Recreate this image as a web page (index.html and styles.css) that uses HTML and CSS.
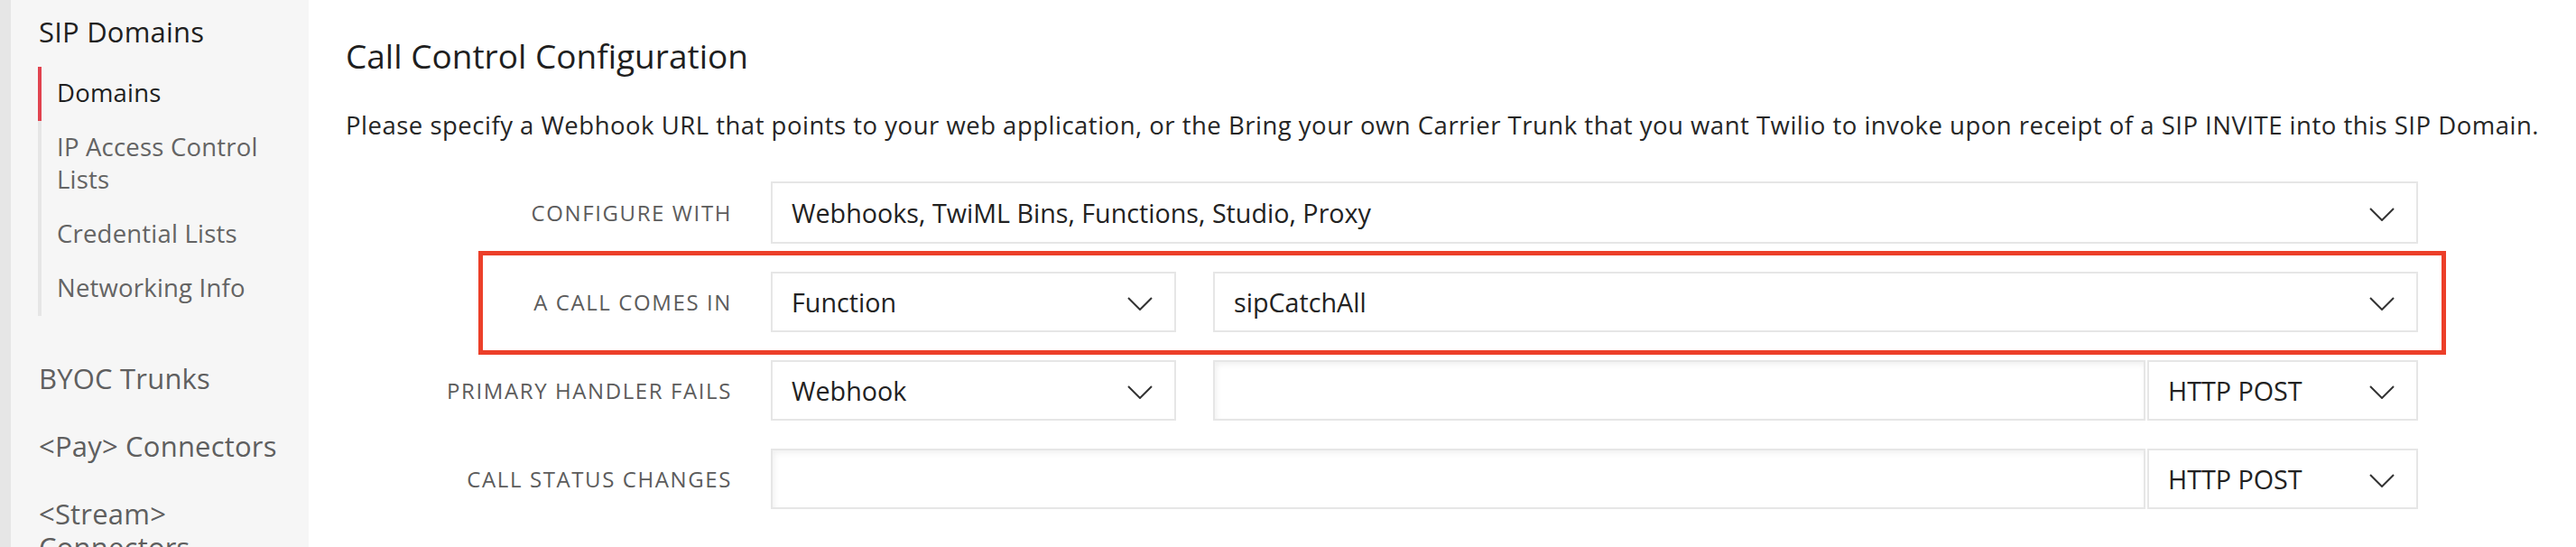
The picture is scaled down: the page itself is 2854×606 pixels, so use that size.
FILE: index.html
```html
<!DOCTYPE html>
<html lang="en">
<head>
<meta charset="utf-8">
<title>Call Control Configuration</title>
<link rel="stylesheet" href="styles.css">
</head>
<body>
<div class="app">
  <div class="rail"></div>
  <nav class="sidebar">
    <div class="nav-title">SIP Domains</div>
    <ul class="subnav">
      <li class="sub active">Domains</li>
      <li class="sub">IP Access Control Lists</li>
      <li class="sub">Credential Lists</li>
      <li class="sub">Networking Info</li>
    </ul>
    <div class="nav-item">BYOC Trunks</div>
    <div class="nav-item">&lt;Pay&gt; Connectors</div>
    <div class="nav-item">&lt;Stream&gt; Connectors</div>
  </nav>
  <main class="main">
    <h2 class="heading">Call Control Configuration</h2>
    <p class="intro">Please specify a Webhook URL that points to your web application, or the Bring your own Carrier Trunk that you want Twilio to invoke upon receipt of a SIP INVITE into this SIP Domain.</p>
    <div class="form">
      <div class="row row-first">
        <div class="label">Configure with</div>
        <div class="fields">
          <div class="select grow">
            <span class="value">Webhooks, TwiML Bins, Functions, Studio, Proxy</span>
            <svg class="chev" viewBox="0 0 28 15" width="28" height="15"><polyline points="1,1 14,14 27,1"/></svg>
          </div>
        </div>
      </div>
      <div class="row highlighted">
        <div class="label">A call comes in</div>
        <div class="fields">
          <div class="select narrow">
            <span class="value">Function</span>
            <svg class="chev" viewBox="0 0 28 15" width="28" height="15"><polyline points="1,1 14,14 27,1"/></svg>
          </div>
          <div class="select grow spaced">
            <span class="value">sipCatchAll</span>
            <svg class="chev" viewBox="0 0 28 15" width="28" height="15"><polyline points="1,1 14,14 27,1"/></svg>
          </div>
        </div>
        <div class="annotation"></div>
      </div>
      <div class="row">
        <div class="label">Primary handler fails</div>
        <div class="fields">
          <div class="select narrow">
            <span class="value">Webhook</span>
            <svg class="chev" viewBox="0 0 28 15" width="28" height="15"><polyline points="1,1 14,14 27,1"/></svg>
          </div>
          <div class="input grow spaced"></div>
          <div class="select method">
            <span class="value">HTTP POST</span>
            <svg class="chev" viewBox="0 0 28 15" width="28" height="15"><polyline points="1,1 14,14 27,1"/></svg>
          </div>
        </div>
      </div>
      <div class="row">
        <div class="label">Call status changes</div>
        <div class="fields">
          <div class="input grow"></div>
          <div class="select method">
            <span class="value">HTTP POST</span>
            <svg class="chev" viewBox="0 0 28 15" width="28" height="15"><polyline points="1,1 14,14 27,1"/></svg>
          </div>
        </div>
      </div>
    </div>
  </main>
</div>
</body>
</html>
```
FILE: styles.css
```css
* { box-sizing: border-box; }

html, body {
  margin: 0;
  padding: 0;
  background: #ffffff;
}

body {
  font-family: "Open Sans", "Noto Sans", sans-serif;
  color: #222222;
}

.app {
  display: flex;
  height: 606px;
  overflow: hidden;
}

.rail {
  width: 12px;
  flex: none;
  background: #e6e6e6;
}

.sidebar {
  width: 330px;
  flex: none;
  background: #f6f6f6;
  padding: 17px 12px 0 31px;
}

.nav-title {
  font-size: 31px;
  line-height: 37px;
  letter-spacing: 0.2px;
  color: #1f1f1f;
}

.subnav {
  list-style: none;
  margin: 20px 0 32px -1px;
  padding: 0;
  border-left: 4px solid #e6e6e6;
}

.sub {
  font-size: 27.5px;
  line-height: 36px;
  letter-spacing: 0.2px;
  padding: 11px 0 13px 17px;
  margin-left: -4px;
  border-left: 4px solid transparent;
  color: #646464;
}

.sub.active {
  border-left-color: #e1434f;
  color: #1f1f1f;
}

.nav-item {
  font-size: 31px;
  line-height: 37px;
  letter-spacing: 0.2px;
  padding: 19px 0;
  color: #5f5f5f;
}

.main {
  flex: 1;
  padding: 0 39px 0 41px;
  min-width: 0;
}

.heading {
  margin: 39px 0 0 0;
  font-size: 37px;
  line-height: 46px;
  font-weight: 400;
  color: #1f1f1f;
}

.intro {
  margin: 36px 0 0 0;
  font-size: 27.5px;
  line-height: 36px;
  letter-spacing: 0.5px;
  color: #262626;
  white-space: nowrap;
}

.form {
  margin-top: 44px;
  display: flex;
  flex-direction: column;
  gap: 31px;
  width: 2296px;
}

.row {
  display: grid;
  grid-template-columns: 428px 1825px;
  column-gap: 43px;
  align-items: center;
  height: 67px;
}

.row-first { height: 69px; }

.label {
  text-align: right;
  text-transform: uppercase;
  font-size: 24px;
  letter-spacing: 1.6px;
  color: #5c5c5c;
  white-space: nowrap;
}

.fields {
  display: flex;
  height: 100%;
}

.select, .input {
  height: 100%;
  border: 2px solid #e6e6e6;
  background: #ffffff;
}

.select {
  display: flex;
  align-items: center;
  justify-content: space-between;
  padding: 0 24px 0 21px;
  font-size: 28.7px;
  color: #222222;
}

.input {
  box-shadow: inset 2px 3px 6px rgba(0, 0, 0, 0.06);
}

.grow { flex: 1; min-width: 0; }
.narrow { width: 449px; flex: none; }
.spaced { margin-left: 41px; }
.method { width: 300px; flex: none; margin-left: 2px; }

.chev {
  flex: none;
  margin-top: 4px;
}

.chev polyline {
  fill: none;
  stroke: #333333;
  stroke-width: 2;
}

.highlighted { position: relative; }

.annotation {
  position: absolute;
  left: 147px;
  right: -31px;
  top: -23px;
  bottom: -25px;
  border: 5px solid #ec3f29;
  pointer-events: none;
}
```
